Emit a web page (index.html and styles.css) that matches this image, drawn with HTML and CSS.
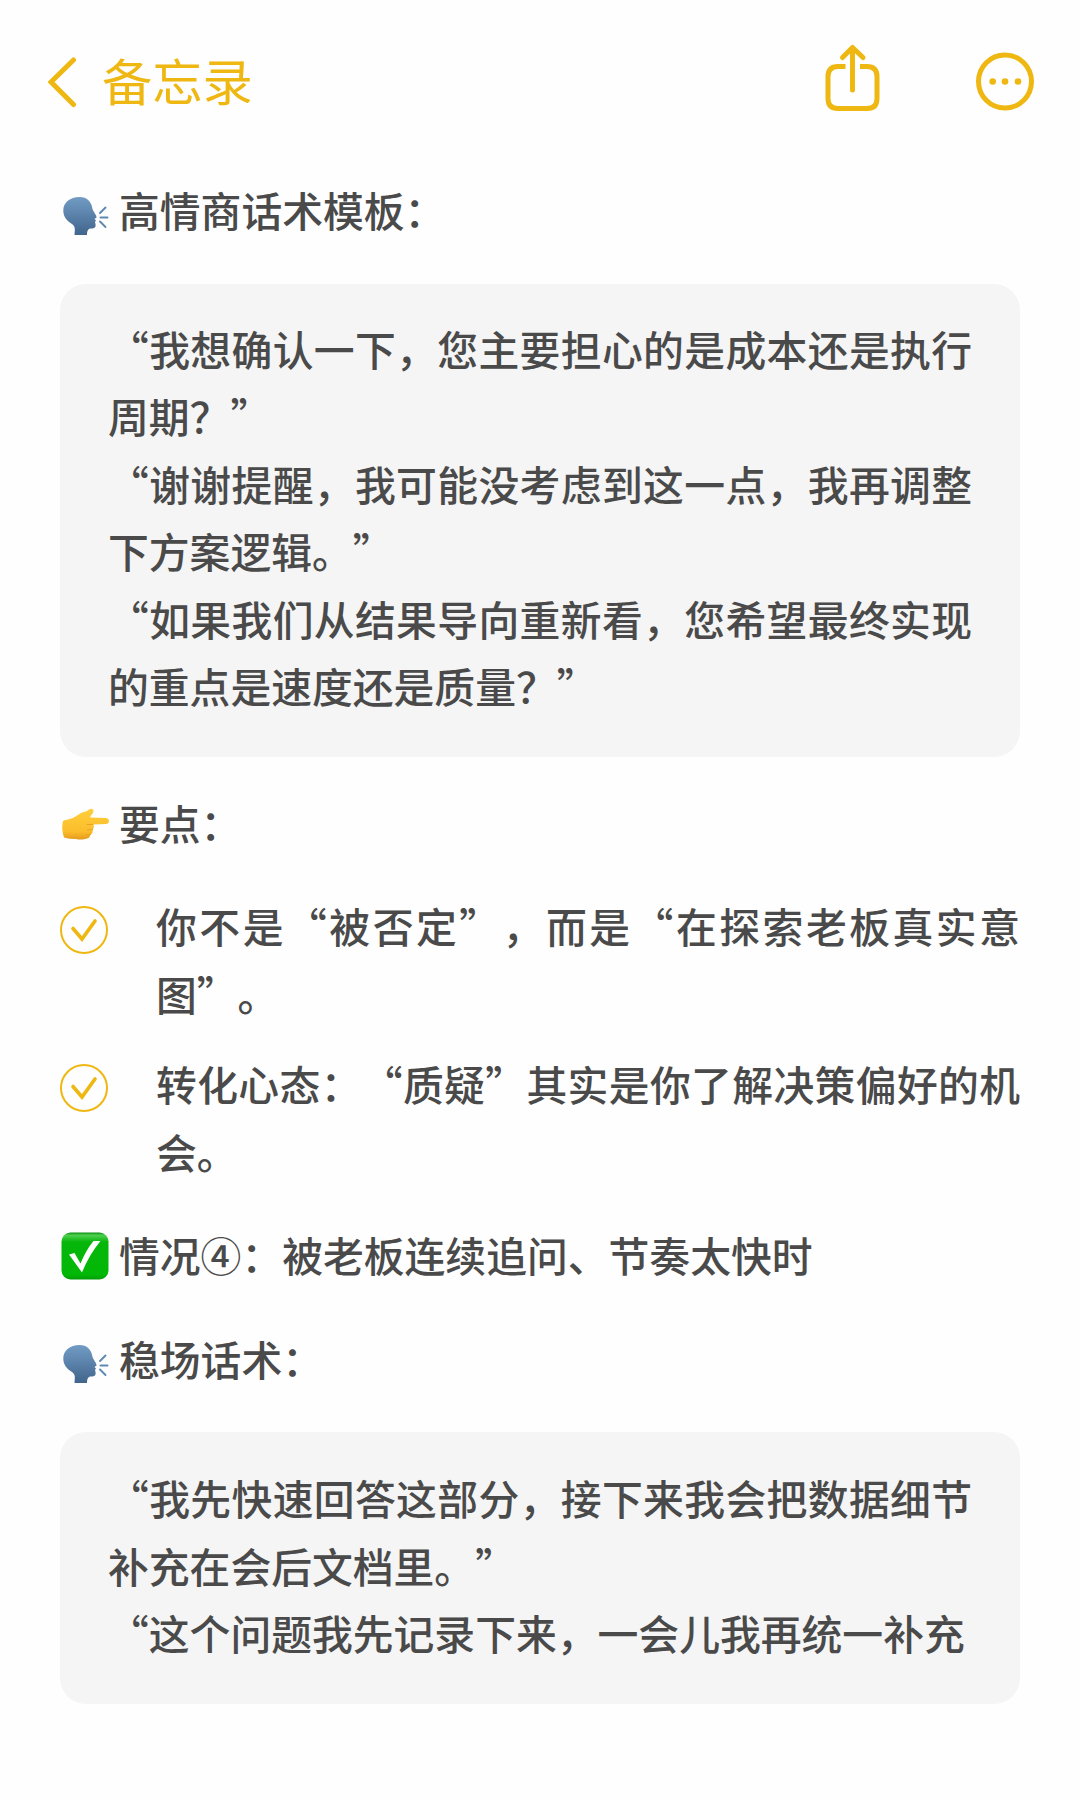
FILE: index.html
```html
<!DOCTYPE html>
<html lang="zh-CN">
<head>
<meta charset="UTF-8">
<meta name="viewport" content="width=device-width, initial-scale=1.0">
<title>备忘录</title>
<link rel="stylesheet" href="styles.css">
</head>
<body>

<!-- shared emoji shapes -->
<svg class="defs" width="0" height="0">
    <defs>
        <linearGradient id="headBlue" x1="0" y1="0" x2="0" y2="1">
            <stop offset="0" stop-color="#729cc4"/>
            <stop offset="1" stop-color="#41658d"/>
        </linearGradient>
        <linearGradient id="handYellow" x1="0" y1="0" x2="0" y2="1">
            <stop offset="0" stop-color="#ffcf3c"/>
            <stop offset="0.75" stop-color="#fbbd2b"/>
            <stop offset="1" stop-color="#e49a1c"/>
        </linearGradient>
        <linearGradient id="boxGreen" x1="0" y1="0" x2="0" y2="1">
            <stop offset="0" stop-color="#0a8f10"/>
            <stop offset="0.06" stop-color="#4fcf50"/>
            <stop offset="0.2" stop-color="#06b60b"/>
            <stop offset="0.9" stop-color="#02b806"/>
            <stop offset="1" stop-color="#049a08"/>
        </linearGradient>
        <symbol id="speaking" viewBox="0 0 50 50">
            <path d="M19.500 6C10 6 3.300 11.500 3.300 19.500C3.300 26 7 30 12 33C15.500 35.500 15 38 14.500 44H27C27 40 28 37.500 31 37.500C35 37.500 36 36 35.500 33L35 31L36 29.500L34.500 28L36.500 26.500C37 24.500 33.500 21 32.500 18C31.500 10.500 27 6 19.500 6Z" fill="url(#headBlue)"/>
            <path d="M40 22L45.500 16.500M40.500 26.500H47.500M40 30.500L45.500 36" stroke="#5d88b2" stroke-width="1.900" stroke-linecap="round" fill="none"/>
        </symbol>
    </defs>
</svg>

<header class="topbar">
    <a class="back">
        <svg width="30" height="52" viewBox="0 0 30 52"><path d="M25.500 4L3 26L25.500 48.500"/></svg>
        <span>备忘录</span>
    </a>
    <div class="actions">
        <svg class="share" width="60" height="70" viewBox="0 0 60 70">
            <path stroke-linecap="butt" d="M23.500 24.500H16Q6 24.500 6 34.500V56.500Q6 66.500 16 66.500H45Q55 66.500 55 56.500V34.500Q55 24.500 45 24.500H38"/>
            <path d="M30.500 48V5.500M20.500 15.500L30.500 5.500L41 15.500" stroke-linejoin="round"/>
        </svg>
        <svg width="60" height="60" viewBox="0 0 60 60">
            <circle cx="30" cy="29.500" r="26.500"/>
            <g class="dots"><circle cx="17.700" cy="29.500" r="3.300"/><circle cx="30" cy="29.500" r="3.300"/><circle cx="43" cy="29.500" r="3.300"/></g>
        </svg>
    </div>
</header>

<main class="note">
    <h2><svg class="emoji speaker"><use href="#speaking"/></svg>高情商话术模板：</h2>

    <div class="quote">
        <p>“我想确认一下，您主要担心的是成本还是执行周期？”</p>
        <p>“谢谢提醒，我可能没考虑到这一点，我再调整下方案逻辑。”</p>
        <p>“如果我们从结果导向重新看，您希望最终实现的重点是速度还是质量？”</p>
    </div>

    <h2>
        <svg class="emoji hand" viewBox="0 0 50 50">
            <path d="M3 21Q5 19.500 8 19.500Q13 18.500 17 15.500Q21 12 27 11Q31 7.500 33 9.500Q34.500 12 31 15.500L30 17.500L46 18Q49 18.500 49 21Q49 23.500 46 24L33 24.500Q35 27 32.500 29.500Q33.500 33 30.500 34.500Q30 38.500 25 39Q20 40 16 39Q9 39 4 37.500Q1 29 3 21Z" fill="url(#handYellow)"/>
            <path d="M27 24.500L33 24.500M27.500 30L32.500 29.500M26 35L30.500 34.500" stroke="#e9a524" stroke-width="1" stroke-linecap="round" fill="none"/>
        </svg>要点：
    </h2>

    <ul class="checks">
        <li>
            <svg class="tick" viewBox="0 0 48 48"><circle cx="24" cy="24" r="23"/><path d="M13 22.500L22 33L35 15"/></svg>
            <p>你不是“被否定”，而是“在探索老板真实意图”。</p>
        </li>
        <li>
            <svg class="tick" viewBox="0 0 48 48"><circle cx="24" cy="24" r="23"/><path d="M13 22.500L22 33L35 15"/></svg>
            <p>转化心态：“质疑”其实是你了解决策偏好的机会。</p>
        </li>
    </ul>

    <h2>
        <svg class="emoji box" viewBox="0 0 50 50">
            <rect x="1.500" y="1.500" width="47" height="47" rx="9" fill="url(#boxGreen)"/>
            <path d="M9 23.500L14.500 22L20.500 32.500Q26 19 33.500 10H40.500Q29 24 22 41.500Z" fill="#fff"/>
        </svg>情况④：被老板连续追问、节奏太快时
    </h2>

    <h2 class="steady"><svg class="emoji speaker"><use href="#speaking"/></svg>稳场话术：</h2>

    <div class="quote">
        <p>“我先快速回答这部分，接下来我会把数据细节补充在会后文档里。”</p>
        <p>“这个问题我先记录下来，一会儿我再统一补充</p>
    </div>
</main>

</body>
</html>
```
FILE: styles.css
```css
* {
    box-sizing: border-box;
}
body {
    margin: 0;
    min-height: 1800px;
    background: #fefefe;
    color: #4a4a4a;
    font-family: "Noto Sans CJK SC", sans-serif;
    font-size: 40.8px;
    font-weight: 500;
    line-height: 67.5px;
    text-spacing-trim: space-all;
}
.defs {
    display: block;
}
.topbar {
    display: flex;
    justify-content: space-between;
    align-items: center;
    height: 164px;
    padding: 0 45px 0 48px;
    color: #eeb711;
}
.topbar svg {
    fill: none;
    stroke: currentColor;
    stroke-width: 5;
    stroke-linecap: round;
}
.topbar .dots {
    fill: currentColor;
    stroke: none;
}
.back {
    display: flex;
    align-items: center;
    gap: 24px;
    font-size: 50.3px;
    font-weight: 400;
}
.back span {
    padding-bottom: 4px;
}
.actions {
    display: flex;
    align-items: center;
    gap: 93px;
}
.share {
    margin-bottom: 10px;
}
.note {
    padding: 12px 60px 0;
}
h2 {
    display: flex;
    align-items: center;
    gap: 9px;
    margin: 0;
    font-size: inherit;
    font-weight: inherit;
}
.emoji {
    width: 50px;
    height: 50px;
}
.speaker {
    margin-top: 12px;
}
.hand {
    margin-top: 6px;
}
.box {
    margin-top: 3px;
}
.quote {
    margin: 40px 0 32px;
    padding: 31px 48px 37px;
    border-radius: 26px;
    background: #f5f5f5;
}
.quote p,
.checks p {
    margin: 0;
    text-align: justify;
}
.checks {
    display: grid;
    gap: 23px;
    margin: 36px 0;
    padding: 0;
    list-style: none;
}
.checks li {
    display: flex;
    gap: 48px;
}
.checks p {
    flex: 1;
}
.tick {
    flex: none;
    width: 48px;
    height: 48px;
    margin-top: 14px;
    fill: none;
    stroke: #eeb711;
    stroke-width: 2;
}
.tick path {
    stroke-width: 3.6;
    stroke-linecap: round;
}
.steady {
    margin-top: 36px;
}
.steady + .quote {
    padding-top: 32px;
}
```
